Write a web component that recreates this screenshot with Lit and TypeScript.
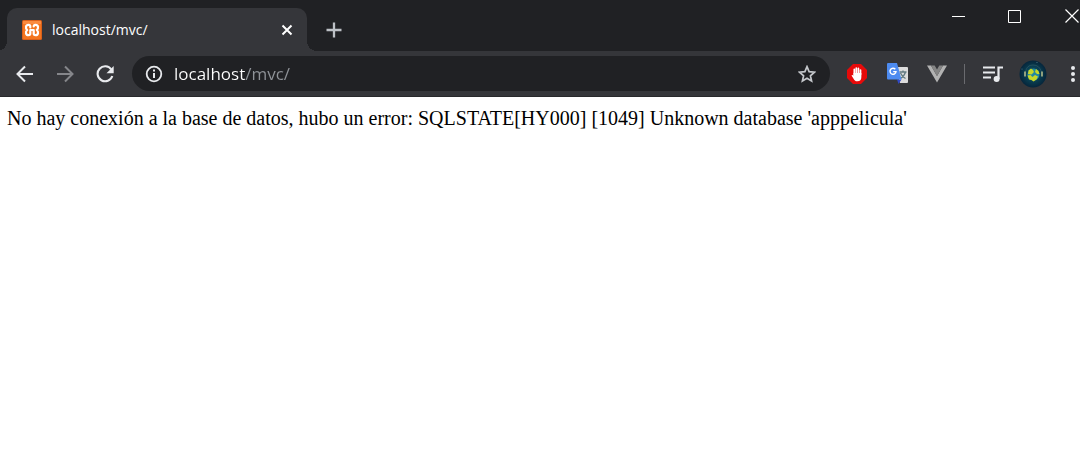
import { LitElement, html, css } from "lit";
import { customElement, state } from "lit/decorators.js";

@customElement("browser-tabs")
class BrowserTabs extends LitElement {
  static styles = css`
    :host { display: flex; height: 51px; padding-left: 7px; background: #202124; font-family: "Open Sans", "Noto Sans", sans-serif; }
    button { border: 0; padding: 0; background: none; color: #fff; display: grid; place-items: center; flex: none; }
    svg { display: block; }
    .tab { position: relative; display: flex; align-items: center; box-sizing: border-box; width: 300px; height: 43px; margin-top: 8px; padding: 0 12px 0 15px; gap: 10px; background: #35363a; border-radius: 10px 10px 0 0; }
    .tab::before, .tab::after { content: ""; position: absolute; bottom: 0; width: 10px; height: 10px; }
    .tab::before { right: 100%; background: radial-gradient(circle at 0 0, transparent 10px, #35363a 10px); }
    .tab::after { left: 100%; background: radial-gradient(circle at 100% 0, transparent 10px, #35363a 10px); }
    .title { flex: 1; font-size: 14px; line-height: 20px; color: #fff; }
    .close { width: 16px; height: 20px; }
    .add { width: 40px; height: 43px; margin: 8px 0 0 7px; color: #bdc1c6; }
    .controls { display: flex; margin-left: auto; }
    .win { width: 56px; height: 32px; }
    .last { width: 38px; justify-content: end; overflow: hidden; }
  `;
  render() {
    return html`
      <div class="tab">
        <svg width="20" height="20" viewBox="0 0 20 20" aria-hidden="true">
          <rect width="20" height="20" rx="1.500" fill="#d9601a" />
          <rect x="1" y="1" width="18" height="18" rx="1" fill="#f4751f" />
          <path d="M1 1h18v3H1z" fill="#ff9a55" opacity=".6" />
          <path d="M8.300 7.500V6.500Q8.300 4.800 6.500 4.800C3.600 4.800 3.200 8.300 5.200 10C3.200 11.700 3.600 15.200 6.500 15.200Q8.300 15.200 8.300 13.500V10H11.700V13.500Q11.700 15.200 13.500 15.200C16.400 15.200 16.800 11.700 14.800 10C16.800 8.300 16.400 4.800 13.500 4.800Q11.700 4.800 11.700 6.500" fill="none" stroke="#fff" stroke-width="2.200" stroke-linecap="round" stroke-linejoin="round" />
        </svg>
        <span class="title">localhost/mvc/</span>
        <button class="close" aria-label="Cerrar pestaña">
          <svg width="12" height="12" viewBox="0 0 12 12"><path d="M1.500 1.500l9 9m0-9l-9 9" stroke="currentColor" stroke-width="2" /></svg>
        </button>
      </div>
      <button class="add" aria-label="Nueva pestaña">
        <svg width="16" height="16" viewBox="0 0 16 16"><path d="M8 .5v15M.5 8h15" stroke="currentColor" stroke-width="2.300" /></svg>
      </button>
      <div class="controls">
        <button class="win" aria-label="Minimizar"><svg width="13" height="13" viewBox="0 0 13 13"><path d="M0 6.500h13" stroke="currentColor" /></svg></button>
        <button class="win" aria-label="Maximizar"><svg width="13" height="13" viewBox="0 0 13 13"><path d="M.5.5h12v12H.5z" fill="none" stroke="currentColor" /></svg></button>
        <button class="win last" aria-label="Cerrar"><svg width="15" height="14" viewBox="0 0 15 14"><path d="M.5.500l13 13m0-13l-13 13" stroke="currentColor" stroke-width="1.200" /></svg></button>
      </div>
    `;
  }
}

@customElement("browser-toolbar")
class BrowserToolbar extends LitElement {
  @state() private address = "localhost/mvc/";

  static styles = css`
    :host { display: flex; align-items: center; height: 45px; padding-left: 5px; background: #35363a; border-bottom: 1px solid #28292c; overflow: hidden; }
    button { border: 0; padding: 0; background: none; color: #e8eaed; display: grid; place-items: center; flex: none; width: 40px; height: 35px; }
    svg { display: block; flex: none; }
    .dim { color: #85868a; }
    .bar { display: flex; align-items: center; flex: 1; min-width: 0; height: 35px; margin: 0 7px; padding-left: 12px; border-radius: 18px; background: #202124; color: #e8eaed; }
    .bar button { width: 46px; color: #c4c7cb; }
    input { flex: 1; min-width: 0; height: 28px; margin-left: 10px; padding: 0; border: 0; outline: 0; font: 17px/28px "Open Sans", "Noto Sans", sans-serif; color: transparent; caret-color: #fff; background: linear-gradient(90deg, #fff 71px, #8f9398 71px); -webkit-background-clip: text; background-clip: text; }
    .rule { flex: none; width: 1px; height: 20px; margin: 0 8px 0 7px; background: #6a6b6f; }
    .menu { width: 27px; padding-left: 13px; }
  `;
  render() {
    return html`
      <button aria-label="Atrás"><svg width="18" height="18" viewBox="0 0 18 18"><path d="M17 9H2M9 1.500L1.500 9L9 16.500" fill="none" stroke="currentColor" stroke-width="2" /></svg></button>
      <button class="dim" aria-label="Adelante"><svg width="18" height="18" viewBox="0 0 18 18"><path d="M1 9h15M9 1.500L16.500 9L9 16.500" fill="none" stroke="currentColor" stroke-width="2" /></svg></button>
      <button aria-label="Recargar"><svg width="18" height="18" viewBox="0 0 18 18"><path d="M15.300 4.500A7.500 7.500 0 1 0 16.300 11" fill="none" stroke="currentColor" stroke-width="2.100" /><path d="M17.700 1v7.200h-7.200z" fill="currentColor" /></svg></button>
      <div class="bar">
        <svg width="20" height="20" viewBox="0 0 20 20" aria-hidden="true"><circle cx="10" cy="10" r="7.300" fill="none" stroke="currentColor" stroke-width="1.800" /><path d="M10 9v5M10 5.500v2" stroke="currentColor" stroke-width="2" /></svg>
        <input aria-label="Dirección" spellcheck="false" .value=${this.address} @input=${(e: Event) => (this.address = (e.target as HTMLInputElement).value)} />
        <button aria-label="Añadir a marcadores"><svg width="18" height="18" viewBox="0 0 18 18"><path d="M9 1.700l2.100 5 5.300.5-4 3.600 1.200 5.300L9 13.300l-4.600 2.800 1.200-5.300-4-3.600 5.300-.5z" fill="none" stroke="currentColor" stroke-width="1.700" /></svg></button>
      </div>
      <button aria-label="Bloqueador de anuncios">
        <svg width="20" height="20" viewBox="0 0 20 20"><path d="M6 0h8l6 6v8l-6 6H6l-6-6V6z" fill="#e60a0a" />
          <path d="M7.300 10.500V5.300M9.300 9.500V4M11.400 9.500V4.400M13.500 10.500V6" stroke="#fff" stroke-width="1.700" stroke-linecap="round" /><path d="M6.500 9h7.850v4q0 4.300-4 4.300c-2.200 0-3-1.200-3.800-2.600L4.500 11.500q.8-1.200 2 0z" fill="#fff" /></svg>
      </button>
      <button aria-label="Traductor">
        <svg width="21" height="21" viewBox="0 0 21 21"><path d="M8 4h12q1 0 1 1v14q0 1-1 1h-7z" fill="#dcdcdc" />
          <path d="M12.500 9h7M16 7.500V9M18.500 9q-1 4-5 6.500M13.500 10q1.500 3.500 5 5.500" fill="none" stroke="#637b82" stroke-width="1.300" />
          <path d="M10 16.500h4.500L11.500 21z" fill="#3049c9" /><path d="M1 0h9l4.500 16.500H1q-1 0-1-1V1q0-1 1-1z" fill="#4d8bf0" />
          <path d="M8.300 6.300A3 3 0 1 0 9 8.600H6.200" fill="none" stroke="#fff" stroke-width="1.400" /></svg>
      </button>
      <button aria-label="Vue devtools"><svg width="20" height="18" viewBox="0 0 20 18"><path d="M0 .5h4L10 11 16 .5h4L10 17.500z" fill="#b2b2b2" /><path d="M4 .5h3.700L10 4.500l2.300-4H16L10 11z" fill="#858585" /></svg></button>
      <span class="rule"></span>
      <button aria-label="Control multimedia"><svg width="20" height="18" viewBox="0 0 20 18"><path d="M0 2.500h12M0 7.500h12M0 12.500h8" stroke="currentColor" stroke-width="2" /><path d="M15.500 14V2.500H20" fill="none" stroke="currentColor" stroke-width="2.200" /><circle cx="13.600" cy="14" r="3" fill="currentColor" /></svg></button>
      <button aria-label="Perfil">
        <svg width="28" height="28" viewBox="0 0 28 28">
          <defs><radialGradient id="night"><stop offset="0" stop-color="#126078" /><stop offset=".65" stop-color="#08384b" /><stop offset="1" stop-color="#06253b" /></radialGradient></defs>
          <circle cx="14" cy="14" r="13.500" fill="url(#night)" />
          <path d="M6.500 12Q7.500 5 14 5t8.500 7" fill="none" stroke="#24505f" />
          <circle cx="14.500" cy="14.500" r="6" fill="#2389a0" />
          <path d="M9.500 10.500l2.500-2 2 1.500 1 2-2.500 2.500-3.500-.5zM17 9l2.500 2 1 3-2.500 0-2-2zM8.500 15.500l3-.5 2 2 2.500-2 3 1.500-1.500 3-3 2-2-1.500-2.500-.5z" fill="#c8d728" />
          <path d="M6 11.500v5M23 11.500v5" stroke="#d8d898" stroke-width="1.300" /><circle cx="18" cy="2.500" r=".6" fill="#52798a" /><circle cx="3" cy="9" r=".6" fill="#52798a" /></svg>
      </button>
      <button class="menu" aria-label="Menú"><svg width="4" height="18" viewBox="0 0 4 18"><g fill="currentColor"><circle cx="2" cy="3" r="2" /><circle cx="2" cy="9" r="2" /><circle cx="2" cy="15" r="2" /></g></svg></button>
    `;
  }
}

@customElement("app-root")
class AppRoot extends LitElement {
  static styles = css`
    :host { display: block; min-height: 100vh; background: #fff; overflow: hidden; }
    .page { padding: 10px 7px; font: 20px/23px "Liberation Serif", "Times New Roman", serif; color: #000; }
    p { margin: 0; }
  `;
  render() {
    return html`
      <header><browser-tabs></browser-tabs><browser-toolbar></browser-toolbar></header>
      <main class="page"><p>No hay conexión a la base de datos, hubo un error: SQLSTATE[HY000] [1049] Unknown database 'apppelicula'</p></main>
    `;
  }
}
